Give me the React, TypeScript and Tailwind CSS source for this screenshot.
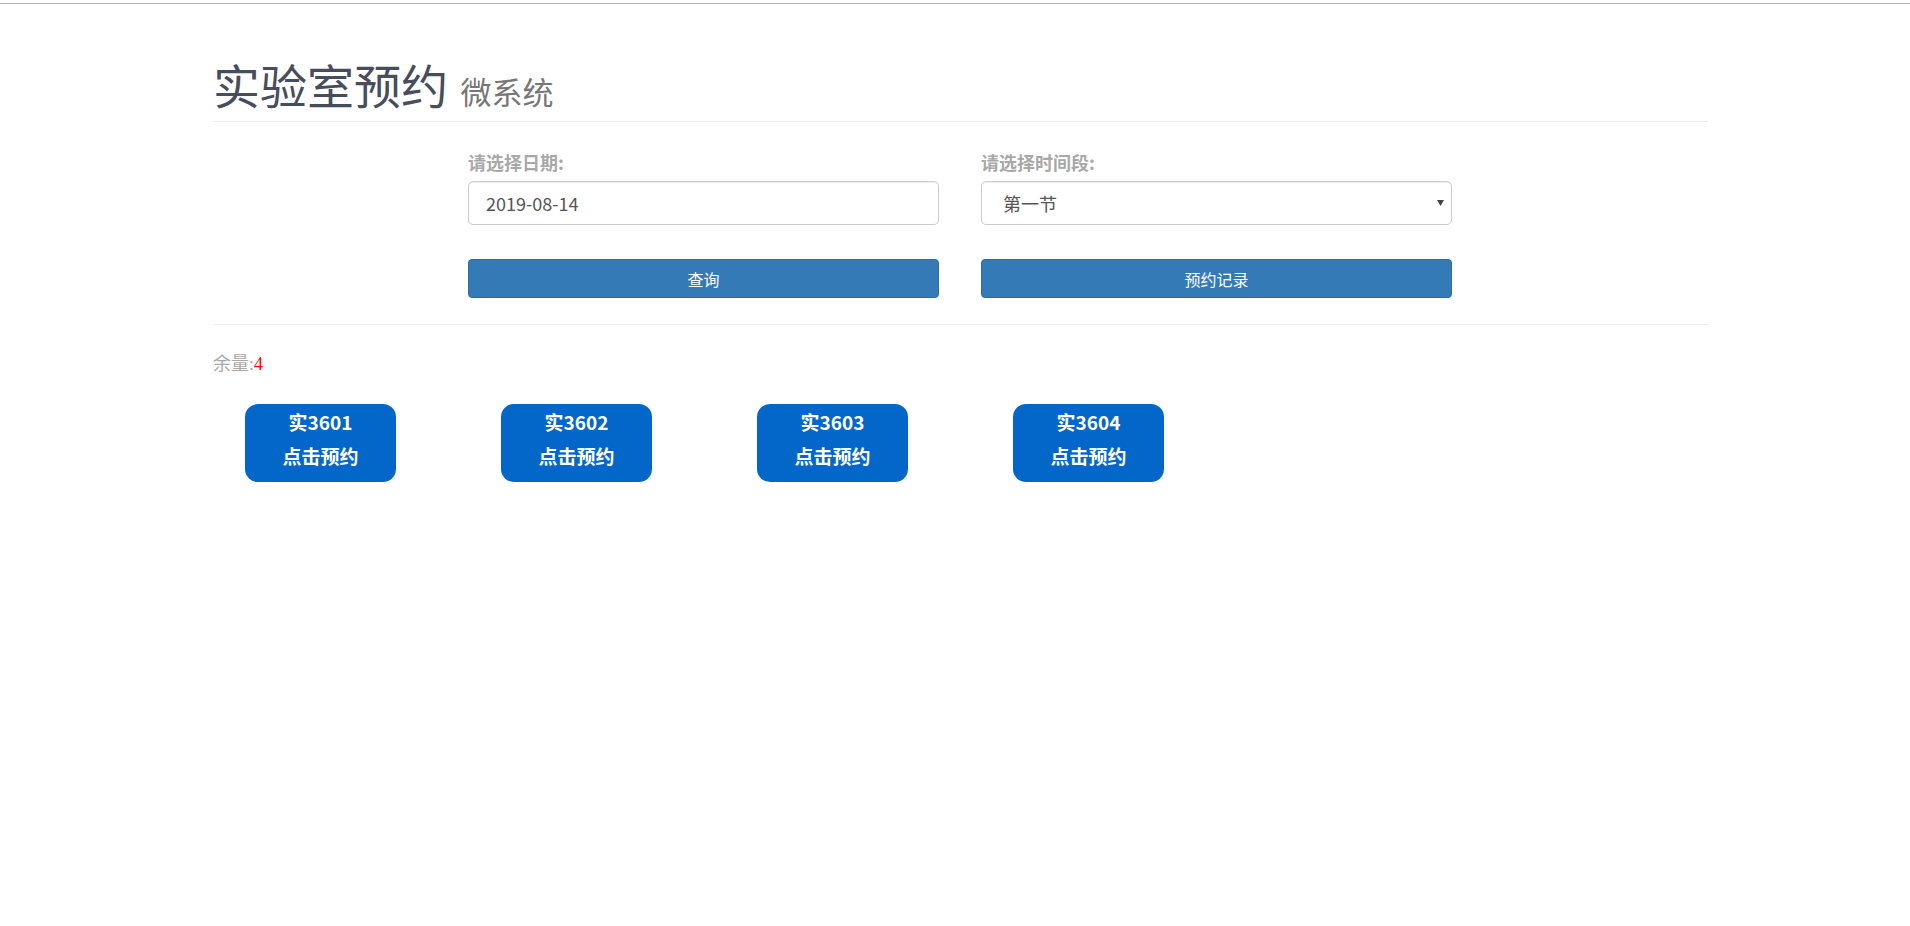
import React, { useState } from 'react';

const rooms = ['3601', '3602', '3603', '3604'];

function RoomCard({ code }: { code: string }) {
  return (
    <button
      type="button"
      className="w-[151px] h-[78px] pb-[8px] rounded-[13px] bg-[#0366c9] text-white font-bold text-[19px] leading-[34px] flex flex-col items-center justify-center"
    >
      <span>实{code}</span>
      <span>点击预约</span>
    </button>
  );
}

export default function App() {
  const [date, setDate] = useState('2019-08-14');
  const [period, setPeriod] = useState('第一节');

  return (
    <div
      className="min-h-screen bg-white"
      style={{ fontFamily: '"Noto Sans CJK SC", "Noto Sans", sans-serif' }}
    >
      <div className="h-[3px]" />
      <div className="border-t border-[#b4b4b4]" />

      <div className="ml-[213px] w-[1495px]">
        {/* header */}
        <div className="mt-[54px] pb-[4px] border-b border-[#eeeeee]">
          <h1 className="text-[47px] leading-[52px] text-[#474d5c] font-normal">
            实验室预约 <small className="ml-[2px] text-[31px] text-[#777777]">微系统</small>
          </h1>
        </div>

        {/* form */}
        <div className="pt-[27px] pb-[26px] border-b border-[#eeeeee]">
          <div className="grid grid-cols-[471px_471px] gap-x-[42px] pl-[255px]">
            <div>
              <label className="block text-[18px] leading-[26px] font-bold text-[#a8a8a8] mb-[6px]">
                请选择日期:
              </label>
              <input
                type="text"
                value={date}
                onChange={e => setDate(e.target.value)}
                className="w-full h-[44px] px-[17px] text-[18px] text-[#555555] border border-[#cccccc] rounded-[5px] shadow-[inset_0_1px_1px_rgba(0,0,0,0.075)] outline-none"
              />
            </div>
            <div>
              <label className="block text-[18px] leading-[26px] font-bold text-[#a8a8a8] mb-[6px]">
                请选择时间段:
              </label>
              <div className="relative">
                <select
                  value={period}
                  onChange={e => setPeriod(e.target.value)}
                  className="w-full h-[44px] pl-[21px] pr-[30px] appearance-none bg-white text-[18px] text-[#555555] border border-[#cccccc] rounded-[5px] shadow-[inset_0_1px_1px_rgba(0,0,0,0.075)] outline-none"
                >
                  <option>第一节</option>
                  <option>第二节</option>
                  <option>第三节</option>
                  <option>第四节</option>
                </select>
                <svg className="absolute right-[8px] top-[19px] pointer-events-none" width="7" height="6" viewBox="0 0 7 6">
                  <path d="M0 0 H7 L3.5 6 Z" fill="#444" />
                </svg>
              </div>
            </div>

            <button
              type="button"
              className="mt-[34px] h-[39px] rounded-[4px] bg-[#337ab7] border border-[#2e6da4] text-white text-[16px]"
            >
              查询
            </button>
            <button
              type="button"
              className="mt-[34px] h-[39px] rounded-[4px] bg-[#337ab7] border border-[#2e6da4] text-white text-[16px]"
            >
              预约记录
            </button>
          </div>
        </div>

        {/* rooms */}
        <div
          className="mt-[26px] text-[18px] leading-[26px] text-[#a8a8a8]"
          style={{ fontFamily: '"Liberation Serif", "Noto Sans CJK SC", serif' }}
        >
          余量:<span className="text-[#ff0000]">4</span>
        </div>

        <div className="mt-[27px] pl-[32px] flex gap-x-[105px]">
          {rooms.map(r => (
            <RoomCard key={r} code={r} />
          ))}
        </div>
      </div>
    </div>
  );
}
